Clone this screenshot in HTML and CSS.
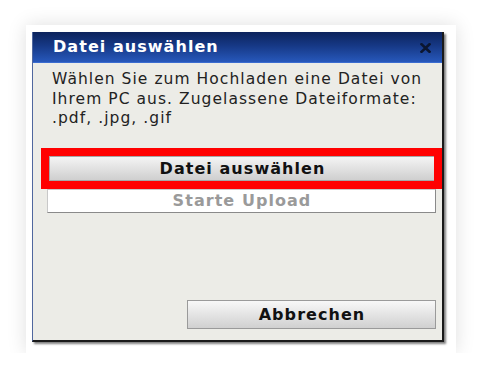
FILE: index.html
```html
<!DOCTYPE html>
<html lang="de">
<head>
<meta charset="utf-8">
<link rel="stylesheet" href="styles.css">
</head>
<body>
<div class="card">
  <div class="dialog">
    <div class="titlebar">
      <span class="title">Datei auswählen</span>
      <svg class="close" width="11" height="10" viewBox="0 0 11 10" aria-label="Schließen">
        <path d="M1.5 1.2 L9.5 8.8 M9.5 1.2 L1.5 8.8" stroke="#0b1630" stroke-width="2.6" stroke-linecap="square" fill="none"/>
      </svg>
    </div>
    <div class="content">
      <p class="desc">Wählen Sie zum Hochladen eine Datei von Ihrem PC aus. Zugelassene Dateiformate: .pdf, .jpg, .gif</p>
      <div class="actions">
        <button class="btn btn-primary">Datei auswählen</button>
        <button class="btn btn-disabled">Starte Upload</button>
        <div class="highlight"></div>
      </div>
      <div class="footer">
        <button class="btn btn-cancel">Abbrechen</button>
      </div>
    </div>
  </div>
</div>
</body>
</html>
```
FILE: styles.css
```css
html, body {
  margin: 0;
  padding: 0;
  background: #ffffff;
}
body {
  padding: 25px 0 0 26px;
  font-family: "DejaVu Sans", Verdana, sans-serif;
}
.card {
  width: 430px;
  height: 328px;
  background: #ffffff;
  box-shadow: 0 0 18px rgba(0,0,0,0.13);
  box-sizing: border-box;
  padding: 7px 0 0 6px;
}
.dialog {
  width: 412px;
  height: 310px;
  box-sizing: border-box;
  background: #ecece7;
  border-left: 1px solid #50679e;
  border-right: 2px solid #1a1a1a;
  border-bottom: 2px solid #1a1a1a;
  box-shadow: 2px 2px 2px rgba(0,0,0,0.5);
  display: flex;
  flex-direction: column;
}
.titlebar {
  height: 31px;
  flex: none;
  box-sizing: border-box;
  background: linear-gradient(#0c235c 0%, #163885 45%, #2758bb 100%);
  border-bottom: 1px solid #3a6cd0;
  display: flex;
  align-items: center;
  justify-content: space-between;
  padding: 0 11px 1px 20px;
}
.title {
  color: #ffffff;
  font-weight: bold;
  font-size: 16px;
  letter-spacing: 1.05px;
}
.close {
  display: block;
  margin-top: 2px;
}
.content {
  flex: 1;
  display: flex;
  flex-direction: column;
  padding: 0 6px 11px 14px;
}
.desc {
  margin: 7px 0 0 5px;
  font-size: 15.5px;
  line-height: 19.5px;
  letter-spacing: 1.05px;
  color: #222222;
}
.actions {
  position: relative;
  margin-top: 27px;
  display: flex;
  flex-direction: column;
}
.btn {
  font-family: "DejaVu Sans", Verdana, sans-serif;
  font-weight: bold;
  font-size: 16px;
  letter-spacing: 1.05px;
  padding: 0 0 0 1px;
  margin: 0;
  cursor: default;
}
.btn-primary {
  margin-left: 2px;
  margin-right: 1px;
  height: 25px;
  border: 1px solid #a6a6a6;
  background: linear-gradient(#f4f4f4, #cfcfcf);
  color: #111111;
}
.btn-disabled {
  margin-top: 8px;
  height: 24px;
  background: #ffffff;
  border: 1px solid #c8c8c8;
  border-right-color: #8a8a8a;
  border-bottom-color: #8a8a8a;
  color: #9a9a9a;
  line-height: 20px;
}
.highlight {
  position: absolute;
  left: -6px;
  top: -8px;
  width: 401px;
  height: 41px;
  box-sizing: border-box;
  border: 8px solid #ff0000;
  pointer-events: none;
}
.footer {
  margin-top: auto;
  display: flex;
  justify-content: flex-end;
}
.btn-cancel {
  width: 249px;
  height: 29px;
  border: 1px solid #9a9a9a;
  background: linear-gradient(#f8f8f8, #d0d0d0);
  color: #111111;
}
```
